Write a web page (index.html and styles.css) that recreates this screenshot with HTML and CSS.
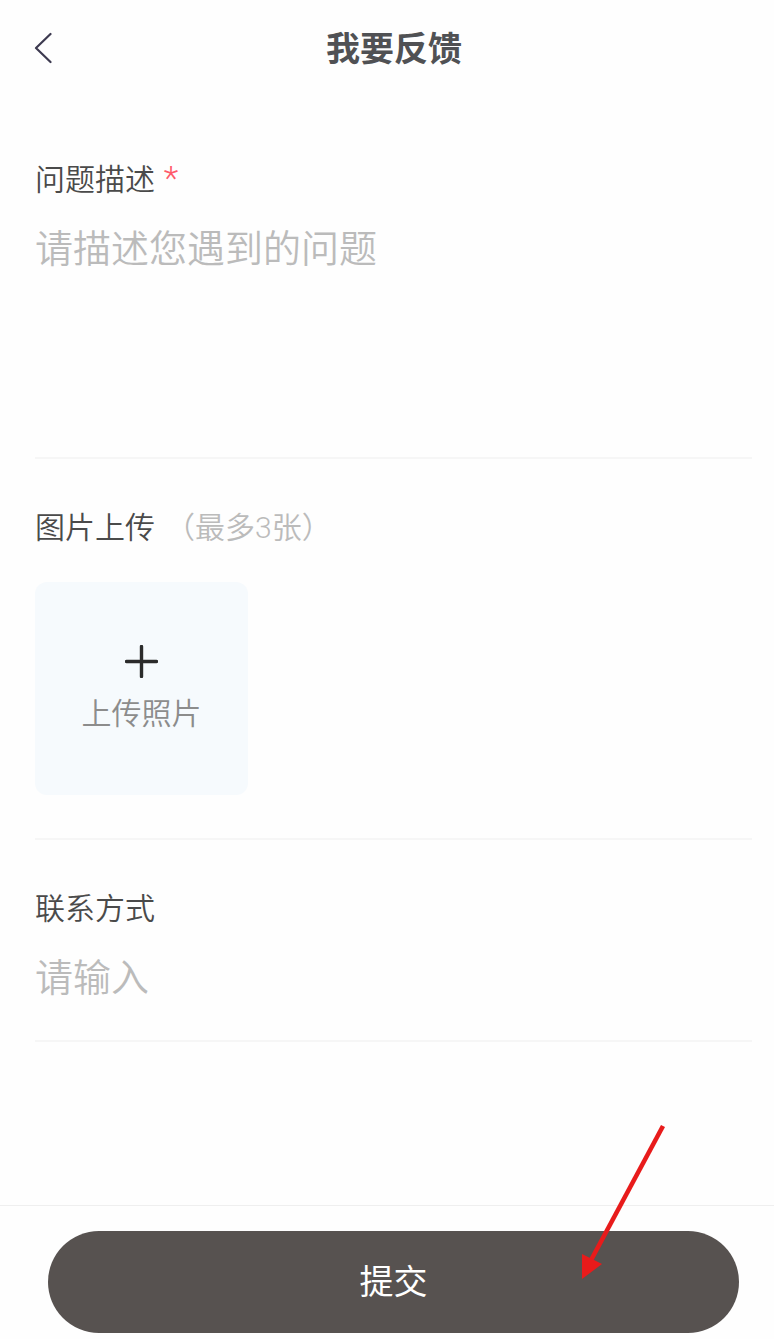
FILE: index.html
```html
<!DOCTYPE html>
<html lang="zh-CN">
    <head>
        <meta charset="utf-8">
        <meta name="viewport" content="width=device-width, initial-scale=1">
        <title>我要反馈</title>
        <link rel="stylesheet" href="styles.css">
    </head>
    <body>
        <header class="topbar">
            <button class="back" type="button" aria-label="返回">
                <svg width="18" height="32" viewBox="0 0 18 32">
                    <path d="M16.5 2 L2 16 L16.5 30" fill="none" stroke="#3d3a50" stroke-width="2.2" stroke-linecap="round" stroke-linejoin="round"/>
                </svg>
            </button>
            <h1>我要反馈</h1>
        </header>

        <form class="feedback">
            <div class="fields">
                <div class="field">
                    <label for="description">问题描述 <span class="required">*</span></label>
                    <textarea id="description" placeholder="请描述您遇到的问题" required></textarea>
                </div>

                <div class="field photos">
                    <div class="label">图片上传<span class="hint">（最多3张）</span></div>
                    <button class="upload" type="button">
                        <svg width="33" height="33" viewBox="0 0 33 33">
                            <path d="M16.5 1.5 V31.5 M1.5 16.5 H31.5" fill="none" stroke="#2b2b2b" stroke-width="3.4" stroke-linecap="round"/>
                        </svg>
                        <span>上传照片</span>
                    </button>
                </div>

                <div class="field">
                    <label for="contact">联系方式</label>
                    <input id="contact" type="text" placeholder="请输入">
                </div>
            </div>

            <footer class="bottombar">
                <button class="submit" type="submit">提交</button>
                <!-- arrow pointing at the submit button -->
                <svg class="arrow" width="86" height="156" viewBox="0 0 86 156">
                    <path d="M83 2 L10 138" stroke="#e81b1b" stroke-width="4.6"/>
                    <path d="M2 155 V130 L22 140 Z" fill="#e81b1b"/>
                </svg>
            </footer>
        </form>
    </body>
</html>
```

FILE: styles.css
```css
* {
    box-sizing: border-box;
    font-family: "Noto Sans CJK SC", sans-serif;
}

body {
    margin: 0;
    min-height: 100vh;
    display: flex;
    flex-direction: column;
    background-color: #fefefe;
    color: #4a4a4a;
}

button {
    border: none;
    padding: 0;
    cursor: pointer;
}

.topbar {
    display: grid;
    grid-template-columns: 40px 1fr 40px;
    align-items: center;
    height: 96px;
    padding: 0 20px 0 34px;
}

.topbar h1 {
    margin: 0;
    padding-bottom: 2px;
    font-size: 34px;
    line-height: 48px;
    font-weight: 700;
    text-align: center;
    color: #505154;
}

.back {
    display: flex;
    background: none;
}

.feedback {
    flex: 1;
    display: flex;
    flex-direction: column;
}

.fields {
    flex: 1;
    padding: 15px 22px 0 35px;
}

.field {
    display: flex;
    flex-direction: column;
    gap: 22px;
    padding: 46px 0 38px;
    border-bottom: 2px solid #f6f6f6;
}

.field label,
.field .label {
    font-size: 30px;
    line-height: 40px;
    font-weight: 350;
}

.field textarea,
.field input {
    width: 100%;
    border: none;
    outline: none;
    padding: 0;
    background: none;
    color: #4a4a4a;
    font-size: 38px;
    line-height: 54px;
    font-weight: 350;
}

.field textarea {
    display: block;
    height: 200px;
    resize: none;
}

.field input {
    height: 54px;
}

::placeholder {
    color: #bbb;
    opacity: 1;
}

.required {
    margin-left: 2px;
    font-family: Roboto, sans-serif;
    font-size: 34px;
    line-height: 1;
    color: #ff5a6a;
}

.hint {
    margin-left: 10px;
    font-family: Roboto, "Noto Sans CJK SC", sans-serif;
    line-height: 1;
    color: #bbb;
}

.photos {
    gap: 37px;
    padding-bottom: 43px;
}

.upload {
    display: flex;
    flex-direction: column;
    align-items: center;
    justify-content: center;
    gap: 13px;
    width: 213px;
    height: 213px;
    padding-bottom: 2px;
    border-radius: 12px;
    background-color: #f6fafd;
    color: #8c8c8c;
    font-size: 30px;
    line-height: 40px;
    font-weight: 350;
}

.bottombar {
    position: relative;
    padding: 25px 35px 6px 48px;
    border-top: 1px solid #efefef;
}

.submit {
    display: block;
    width: 100%;
    height: 102px;
    padding-bottom: 4px;
    border-radius: 51px;
    background-color: #575250;
    color: #fff;
    font-size: 34px;
    line-height: 48px;
}

.arrow {
    position: absolute;
    top: -82px;
    right: 108px;
    pointer-events: none;
}
```
